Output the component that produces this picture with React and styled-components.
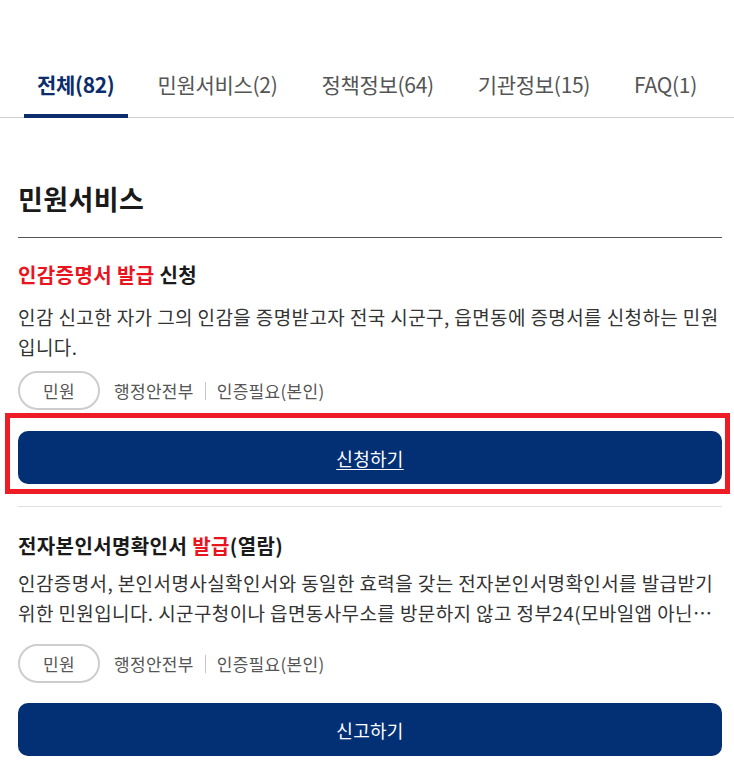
import React from 'react';
import styled, { createGlobalStyle } from 'styled-components';

const GlobalStyle = createGlobalStyle`
  body {
    margin: 0;
    background: #fff;
    font-family: "Noto Sans CJK KR", "Noto Sans", sans-serif;
    color: #222;
  }
  * { box-sizing: border-box; }
`;

const Page = styled.div`
  width: 734px;
`;

const TabBar = styled.nav`
  display: flex;
  justify-content: space-between;
  padding: 69px 23px 0 24px;
  border-bottom: 1px solid #cfcfcf;
`;

const Tab = styled.a`
  display: block;
  padding: 0 ${(p) => (p.$active ? '13px' : '14px')} 15px;
  font-size: 21px;
  line-height: 30px;
  letter-spacing: -0.3px;
  color: ${(p) => (p.$active ? '#0b2d6b' : '#555')};
  font-weight: ${(p) => (p.$active ? 700 : 400)};
  border-bottom: 4px solid ${(p) => (p.$active ? '#0b2d6b' : 'transparent')};
  margin-bottom: -1px;
  cursor: pointer;
`;

const Content = styled.section`
  padding: 0 12px 0 18px;
`;

const Heading = styled.h2`
  margin: 63px 0 0;
  padding-bottom: 20px;
  font-size: 27px;
  line-height: 36px;
  letter-spacing: 0.4px;
  font-weight: 700;
  color: #1a1a1a;
  border-bottom: 1px solid #555;
`;

const Item = styled.article`
  padding-top: ${(p) => (p.$first ? '23px' : '25px')};
  border-top: ${(p) => (p.$first ? 'none' : '1px solid #dedede')};
  margin-top: ${(p) => (p.$first ? '0' : '12px')};
`;

const Title = styled.h3`
  margin: 0;
  font-size: 20px;
  line-height: 28px;
  letter-spacing: 0.4px;
  font-weight: 700;
  color: #1a1a1a;
`;

const Hl = styled.span`
  color: #e8141e;
`;

const Desc = styled.p`
  margin: ${(p) => (p.$gap ? p.$gap : '10px')} 0 0;
  font-size: 19px;
  line-height: 30px;
  letter-spacing: 0.4px;
  color: #333;
  display: -webkit-box;
  -webkit-line-clamp: 2;
  -webkit-box-orient: vertical;
  overflow: hidden;
`;

const Meta = styled.div`
  display: flex;
  align-items: center;
  margin-top: ${(p) => p.$gap || '9px'};
  font-size: 17px;
  letter-spacing: 0.3px;
  color: #555;
`;

const Pill = styled.span`
  display: inline-flex;
  align-items: center;
  justify-content: center;
  width: 82px;
  height: 39px;
  border: 2px solid #cdcdcd;
  border-radius: 20px;
  margin-right: 14px;
`;

const Sep = styled.span`
  width: 1px;
  height: 18px;
  background: #c8c8c8;
  margin: 0 11px;
`;

const FocusRing = styled.div`
  margin: 3px -8px 0 -13px;
  padding: 13px 3px 5px 8px;
  border: 5px solid #ee1c25;
`;

const Button = styled.button`
  display: block;
  width: 100%;
  height: 53px;
  margin-top: ${(p) => p.$gap || '0'};
  border: none;
  border-radius: 10px;
  background: #033075;
  color: #fff;
  font-family: inherit;
  font-size: 18px;
  letter-spacing: 0.3px;
  text-decoration: ${(p) => (p.$underline ? 'underline' : 'none')};
  text-underline-offset: 3px;
  cursor: pointer;
`;

const tabs = [
  { label: '전체(82)', active: true },
  { label: '민원서비스(2)' },
  { label: '정책정보(64)' },
  { label: '기관정보(15)' },
  { label: 'FAQ(1)' },
];

export default function App() {
  return (
    <Page>
      <GlobalStyle />
      <TabBar>
        {tabs.map((t) => (
          <Tab key={t.label} $active={t.active}>
            {t.label}
          </Tab>
        ))}
      </TabBar>
      <Content>
        <Heading>민원서비스</Heading>

        <Item $first>
          <Title>
            <Hl>인감증명서 발급</Hl> 신청
          </Title>
          <Desc $gap="13px">
            인감 신고한 자가 그의 인감을 증명받고자 전국 시군구, 읍면동에 증명서를 신청하는 민원입니다.
          </Desc>
          <Meta>
            <Pill>민원</Pill>
            행정안전부
            <Sep />
            인증필요(본인)
          </Meta>
          <FocusRing>
            <Button $underline>신청하기</Button>
          </FocusRing>
        </Item>

        <Item>
          <Title>
            전자본인서명확인서 <Hl>발급</Hl>(열람)
          </Title>
          <Desc $gap="8px">
            인감증명서, 본인서명사실확인서와 동일한 효력을 갖는 전자본인서명확인서를 발급받기 위한 민원입니다. 시군구청이나 읍면동사무소를 방문하지 않고 정부24(모바일앱 아닌 PC)에서 발급받을 수 있습니다.
          </Desc>
          <Meta $gap="16px">
            <Pill>민원</Pill>
            행정안전부
            <Sep />
            인증필요(본인)
          </Meta>
          <Button $gap="20px">신고하기</Button>
        </Item>
      </Content>
    </Page>
  );
}
